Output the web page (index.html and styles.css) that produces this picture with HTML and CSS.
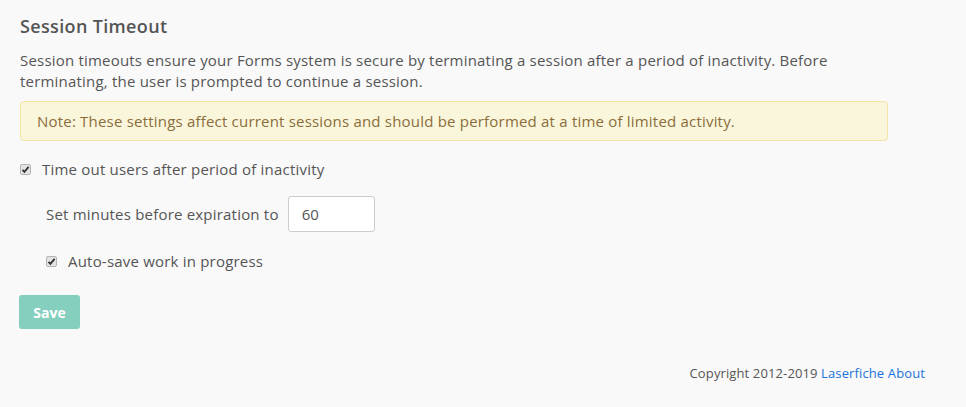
FILE: index.html
```html
<!DOCTYPE html>
<html lang="en">
<head>
    <meta charset="UTF-8">
    <title>Session Timeout</title>
    <link rel="stylesheet" href="styles.css">
</head>
<body>
    <div class="page">
        <h2 class="title">Session Timeout</h2>
        <p class="intro">Session timeouts ensure your Forms system is secure by terminating a session after a period of inactivity. Before terminating, the user is prompted to continue a session.</p>

        <div class="note">Note: These settings affect current sessions and should be performed at a time of limited activity.</div>

        <!-- Timeout options -->
        <label class="check-row">
            <span class="check">
                <svg width="11" height="11" viewBox="0 0 11 11"><path d="M2.5 5.8 L4.4 7.8 L8.6 2.8" fill="none" stroke="#333" stroke-width="1.8"/></svg>
            </span>
            Time out users after period of inactivity
        </label>

        <div class="sub">
            <div class="minutes-row">
                <span>Set minutes before expiration to</span>
                <input class="minutes" type="text" value="60">
            </div>

            <label class="check-row">
                <span class="check">
                    <svg width="11" height="11" viewBox="0 0 11 11"><path d="M2.5 5.8 L4.4 7.8 L8.6 2.8" fill="none" stroke="#333" stroke-width="1.8"/></svg>
                </span>
                Auto-save work in progress
            </label>
        </div>

        <button class="save">Save</button>

        <div class="footer">Copyright 2012-2019 <a href="#">Laserfiche</a> <a href="#">About</a></div>
    </div>
</body>
</html>
```

FILE: styles.css
```css
body {
    margin: 0;
    background: #f9f9f9;
    font-family: 'Open Sans', 'Noto Sans', sans-serif;
    font-size: 15px;
    letter-spacing: 0.2px;
    color: #555;
}

.page {
    padding: 12px 20px 0 20px;
    width: 868px;
}

.title {
    margin: 0;
    font-size: 18px;
    font-weight: 600;
    letter-spacing: 0.35px;
    line-height: 28px;
    color: #555;
}

.intro {
    margin: 10px 0 9px 0;
    line-height: 21px;
    width: 840px;
}

.note {
    background: #faf6dc;
    border: 1px solid #f3e3a6;
    border-radius: 4px;
    color: #8a6d3b;
    padding: 9px 16px;
    line-height: 20px;
}

.check-row {
    display: flex;
    align-items: center;
    gap: 11px;
    line-height: 20px;
}

.page > .check-row {
    margin-top: 18px;
}

.check {
    width: 11px;
    height: 11px;
    border: 1px solid #b4b4b4;
    border-radius: 2px;
    background: #e4e4e4;
    display: flex;
    box-sizing: border-box;
    margin-top: 1px;
}

.check svg {
    margin: -1px;
}

.sub {
    padding-left: 26px;
}

.minutes-row {
    display: flex;
    align-items: center;
    gap: 9px;
    margin-top: 17px;
}

.minutes {
    width: 87px;
    height: 36px;
    box-sizing: border-box;
    border: 1px solid #ccc;
    border-radius: 3px;
    background: #fff;
    padding: 0 13px;
    font-family: inherit;
    font-size: 15px;
    color: #555;
}

.sub .check-row {
    margin-top: 19px;
}

.save {
    margin-top: 24px;
    margin-left: -1px;
    width: 61px;
    height: 34px;
    border: none;
    border-radius: 3px;
    background: #85cfbf;
    color: #fff;
    font-family: inherit;
    font-size: 14px;
    font-weight: 700;
    padding: 0;
}

.footer {
    margin-top: 35px;
    text-align: right;
    font-size: 13px;
    letter-spacing: 0.12px;
    color: #555;
    width: 905px;
}

.footer a {
    color: #1a73d9;
    text-decoration: none;
}
```
